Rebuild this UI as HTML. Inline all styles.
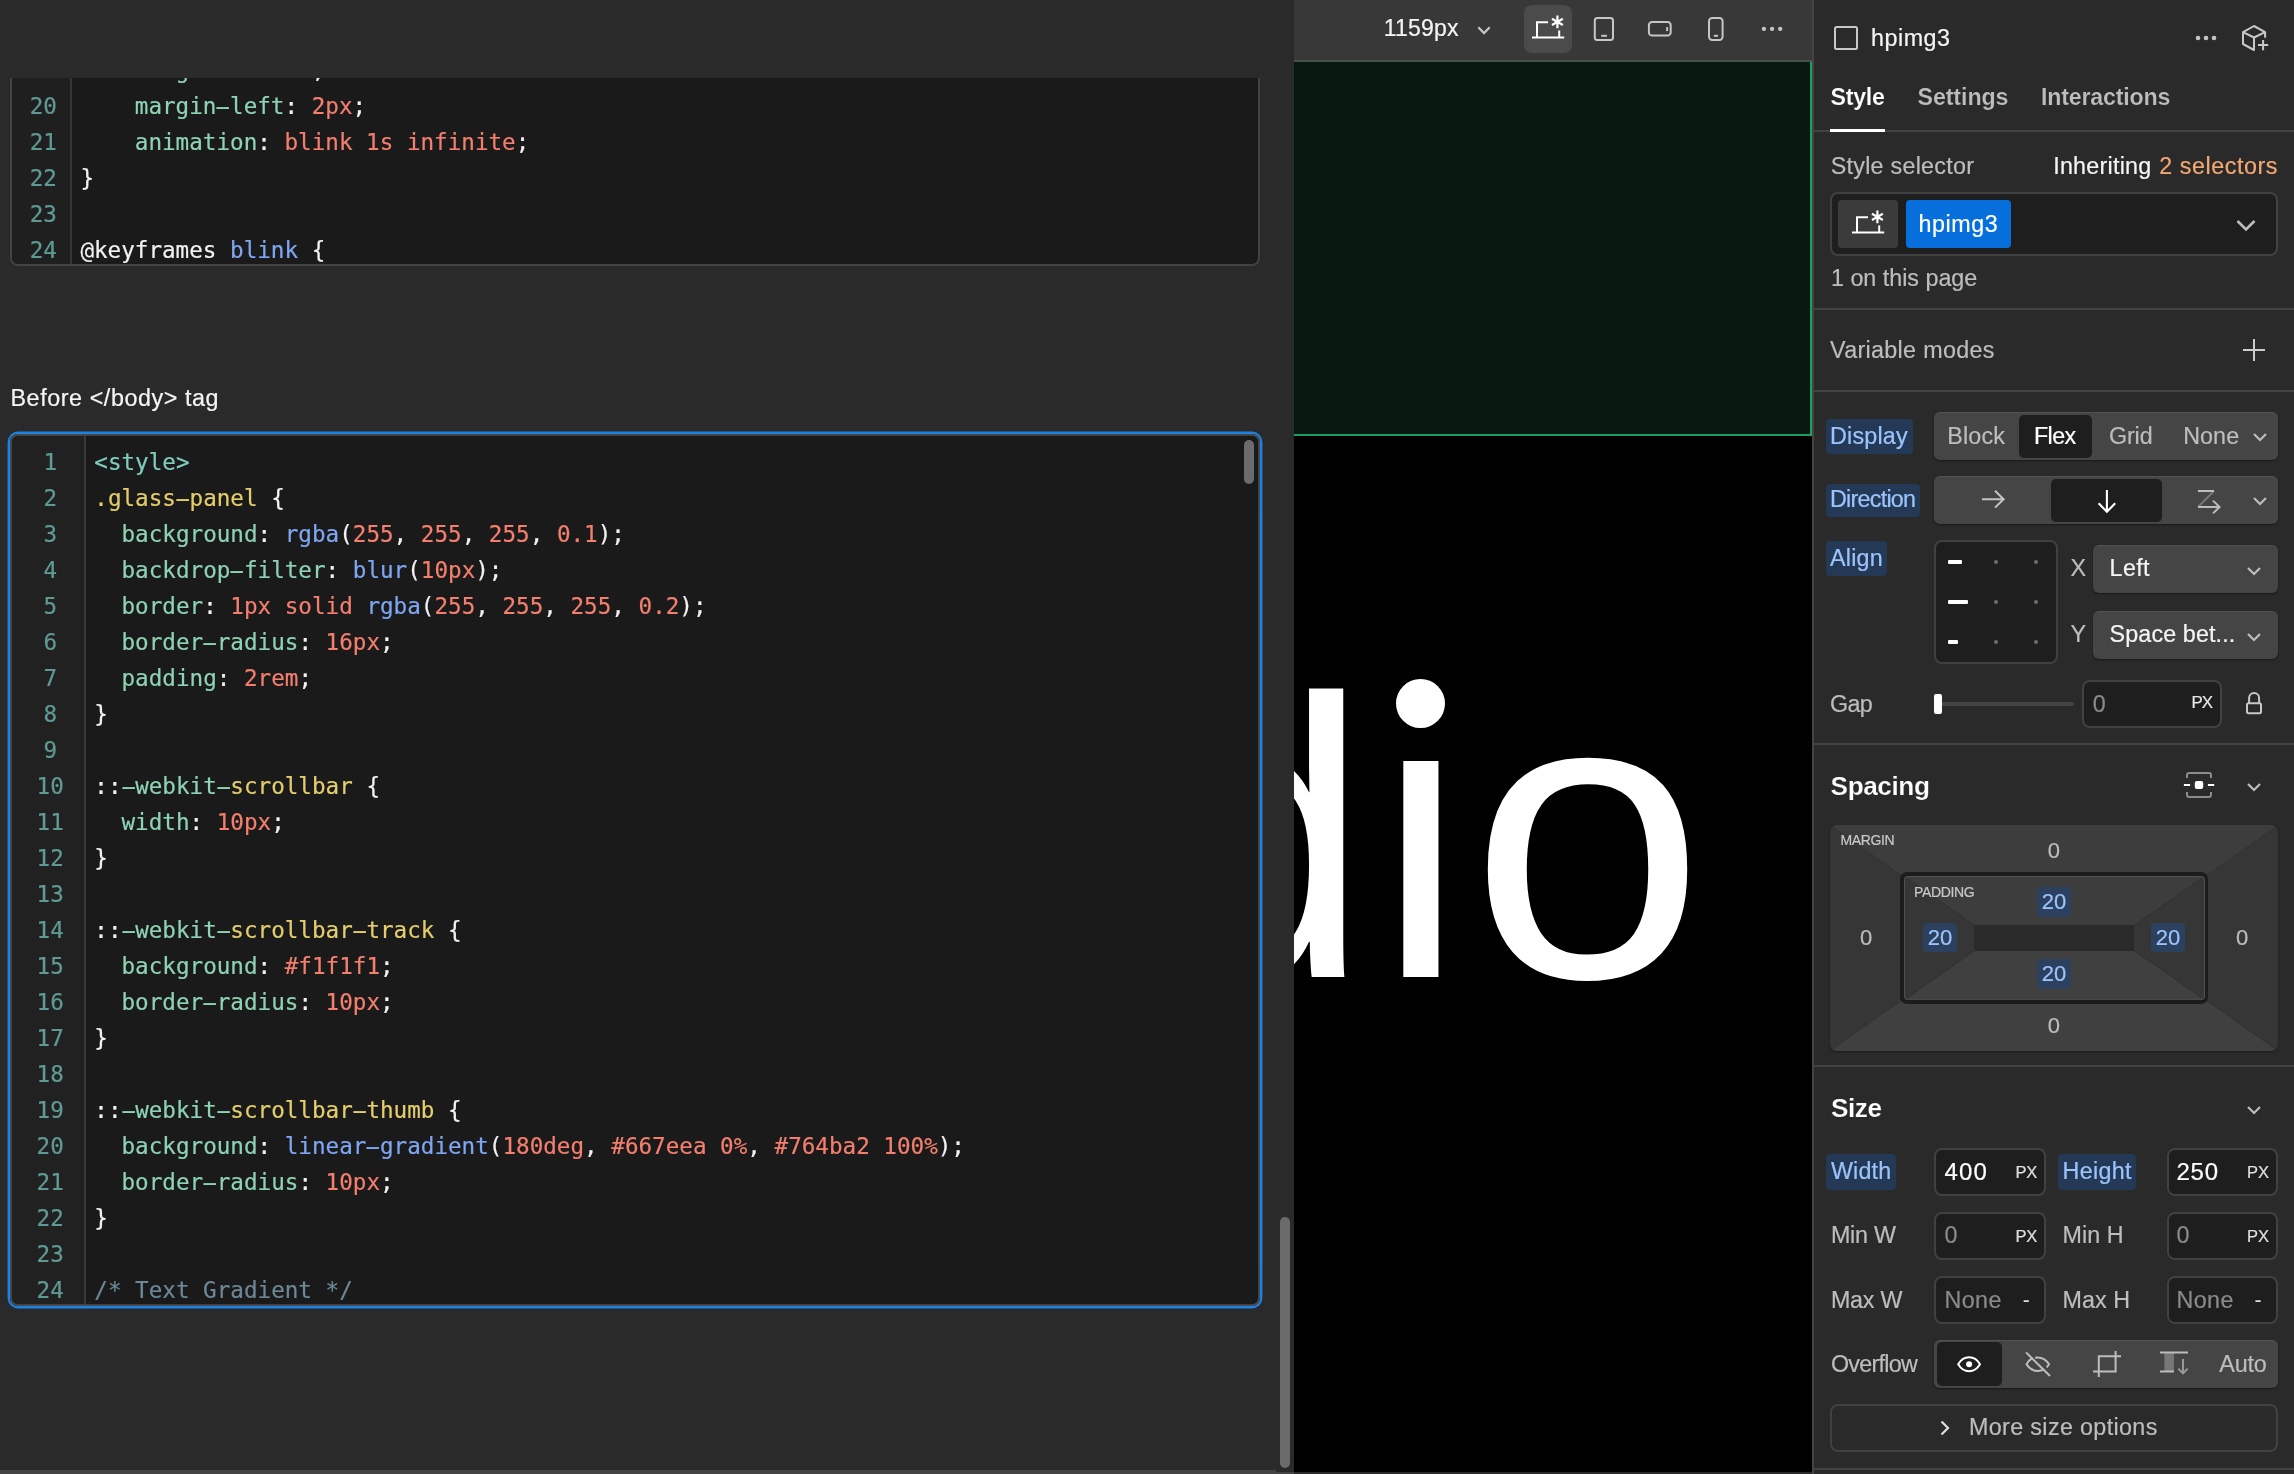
<!DOCTYPE html>
<html lang="en"><head><meta charset="utf-8"><title>Designer</title>
<style>
html,body{margin:0;padding:0}
body{will-change:transform;width:2294px;height:1474px;position:relative;overflow:hidden;background:#2a2a2a;font-family:"Liberation Sans",sans-serif;-webkit-font-smoothing:antialiased}
.b{position:absolute;box-sizing:border-box;display:block}
.t{position:absolute;white-space:pre;display:block}
.code{position:absolute;white-space:pre;font-family:"DejaVu Sans Mono","Liberation Mono",monospace;font-size:22.6px;line-height:36px;height:36px;color:#f2f2f2;letter-spacing:0;-webkit-text-stroke:0.2px}
.ln{position:absolute;white-space:pre;font-family:"DejaVu Sans Mono","Liberation Mono",monospace;font-size:22.6px;line-height:36px;height:36px;color:#5f9a94;text-align:center;width:60px;-webkit-text-stroke:0.2px}
.p{color:#8dd3b4}.n{color:#f47f6e}.f{color:#7ea6f2}.s{color:#e4cd6c}.g{color:#7fcdbd}.c{color:#6d8796}
.big{position:absolute;white-space:pre;color:#fff;font-family:"Liberation Sans",sans-serif;display:block}
.h{display:inline-block;font-style:normal;transform:scaleX(2.1)}

</style></head>
<body>
<!-- left: custom code panel -->
<div class="b" style="left:0px;top:0px;width:1294px;height:1474px;background:#2a2a2a"></div>
<div class="b" style="left:10px;top:78px;width:1250px;height:188px;background:#1a1a1a;border:2px solid #434343;border-top:none;border-radius:0 0 8px 8px;overflow:hidden">
<div class="b" style="left:0;top:0;width:60px;height:200px;background:#1f1f1f;border-right:2px solid #363636"></div>
</div>
<div class="b" style="left:12px;top:78px;width:1246px;height:185px;overflow:hidden">
<div class="ln" style="left:1.3px;top:-25.8px">19</div><div class="code" style="left:68.4px;top:-25.8px">    <span class=p>height</span>: <span class=n>1.2em</span>;</div>
<div class="ln" style="left:1.3px;top:10.2px">20</div><div class="code" style="left:68.4px;top:10.2px">    <span class=p>margin<i class=h>-</i>left</span>: <span class=n>2px</span>;</div>
<div class="ln" style="left:1.3px;top:46.2px">21</div><div class="code" style="left:68.4px;top:46.2px">    <span class=p>animation</span>: <span class=n>blink 1s infinite</span>;</div>
<div class="ln" style="left:1.3px;top:82.2px">22</div><div class="code" style="left:68.4px;top:82.2px">}</div>
<div class="ln" style="left:1.3px;top:118.2px">23</div><div class="code" style="left:68.4px;top:118.2px"></div>
<div class="ln" style="left:1.3px;top:154.2px">24</div><div class="code" style="left:68.4px;top:154.2px">@keyframes <span class=f>blink</span> {</div>
</div>
<span class="t" style="left:10.5px;top:386.6px;font-size:23.3px;line-height:23.3px;color:#f5f5f5;font-weight:normal;letter-spacing:0.58px;-webkit-text-stroke:0.2px;">Before &lt;/body&gt; tag</span>
<div class="b" style="left:10px;top:434px;width:1250px;height:872px;background:#1a1a1a;border-radius:8px;box-shadow:0 0 0 2.4px #1d80e3;overflow:hidden">
<div class="b" style="left:0;top:0;width:76px;height:900px;background:#212121;border-right:2px solid #383838"></div>
</div>
<div class="b" style="left:12px;top:436px;width:1246px;height:868px;overflow:hidden">
<div class="ln" style="left:8.2px;top:7.8px">1</div><div class="code" style="left:82.3px;top:7.8px"><span class=g>&lt;style&gt;</span></div>
<div class="ln" style="left:8.2px;top:43.8px">2</div><div class="code" style="left:82.3px;top:43.8px"><span class=s>.glass<i class=h>-</i>panel</span> {</div>
<div class="ln" style="left:8.2px;top:79.8px">3</div><div class="code" style="left:82.3px;top:79.8px">  <span class=p>background</span>: <span class=f>rgba</span>(<span class=n>255</span>, <span class=n>255</span>, <span class=n>255</span>, <span class=n>0.1</span>);</div>
<div class="ln" style="left:8.2px;top:115.8px">4</div><div class="code" style="left:82.3px;top:115.8px">  <span class=p>backdrop<i class=h>-</i>filter</span>: <span class=f>blur</span>(<span class=n>10px</span>);</div>
<div class="ln" style="left:8.2px;top:151.8px">5</div><div class="code" style="left:82.3px;top:151.8px">  <span class=p>border</span>: <span class=n>1px solid</span> <span class=f>rgba</span>(<span class=n>255</span>, <span class=n>255</span>, <span class=n>255</span>, <span class=n>0.2</span>);</div>
<div class="ln" style="left:8.2px;top:187.8px">6</div><div class="code" style="left:82.3px;top:187.8px">  <span class=p>border<i class=h>-</i>radius</span>: <span class=n>16px</span>;</div>
<div class="ln" style="left:8.2px;top:223.8px">7</div><div class="code" style="left:82.3px;top:223.8px">  <span class=p>padding</span>: <span class=n>2rem</span>;</div>
<div class="ln" style="left:8.2px;top:259.8px">8</div><div class="code" style="left:82.3px;top:259.8px">}</div>
<div class="ln" style="left:8.2px;top:295.8px">9</div><div class="code" style="left:82.3px;top:295.8px"></div>
<div class="ln" style="left:8.2px;top:331.8px">10</div><div class="code" style="left:82.3px;top:331.8px">::<span class=p><i class=h>-</i>webkit<i class=h>-</i></span><span class=s>scrollbar</span> {</div>
<div class="ln" style="left:8.2px;top:367.8px">11</div><div class="code" style="left:82.3px;top:367.8px">  <span class=p>width</span>: <span class=n>10px</span>;</div>
<div class="ln" style="left:8.2px;top:403.8px">12</div><div class="code" style="left:82.3px;top:403.8px">}</div>
<div class="ln" style="left:8.2px;top:439.8px">13</div><div class="code" style="left:82.3px;top:439.8px"></div>
<div class="ln" style="left:8.2px;top:475.8px">14</div><div class="code" style="left:82.3px;top:475.8px">::<span class=p><i class=h>-</i>webkit<i class=h>-</i></span><span class=s>scrollbar<i class=h>-</i>track</span> {</div>
<div class="ln" style="left:8.2px;top:511.8px">15</div><div class="code" style="left:82.3px;top:511.8px">  <span class=p>background</span>: <span class=n>#f1f1f1</span>;</div>
<div class="ln" style="left:8.2px;top:547.8px">16</div><div class="code" style="left:82.3px;top:547.8px">  <span class=p>border<i class=h>-</i>radius</span>: <span class=n>10px</span>;</div>
<div class="ln" style="left:8.2px;top:583.8px">17</div><div class="code" style="left:82.3px;top:583.8px">}</div>
<div class="ln" style="left:8.2px;top:619.8px">18</div><div class="code" style="left:82.3px;top:619.8px"></div>
<div class="ln" style="left:8.2px;top:655.8px">19</div><div class="code" style="left:82.3px;top:655.8px">::<span class=p><i class=h>-</i>webkit<i class=h>-</i></span><span class=s>scrollbar<i class=h>-</i>thumb</span> {</div>
<div class="ln" style="left:8.2px;top:691.8px">20</div><div class="code" style="left:82.3px;top:691.8px">  <span class=p>background</span>: <span class=f>linear<i class=h>-</i>gradient</span>(<span class=n>180deg</span>, <span class=n>#667eea 0%</span>, <span class=n>#764ba2 100%</span>);</div>
<div class="ln" style="left:8.2px;top:727.8px">21</div><div class="code" style="left:82.3px;top:727.8px">  <span class=p>border<i class=h>-</i>radius</span>: <span class=n>10px</span>;</div>
<div class="ln" style="left:8.2px;top:763.8px">22</div><div class="code" style="left:82.3px;top:763.8px">}</div>
<div class="ln" style="left:8.2px;top:799.8px">23</div><div class="code" style="left:82.3px;top:799.8px"></div>
<div class="ln" style="left:8.2px;top:835.8px">24</div><div class="code" style="left:82.3px;top:835.8px"><span class=c>/* Text Gradient */</span></div>
</div>
<div class="b" style="left:10px;top:434px;width:1250px;height:872px;border-radius:8px;box-shadow:inset 0 0 0 1.8px #4c4c50"></div>
<div class="b" style="left:1244px;top:440px;width:10px;height:44px;background:#6b6b6b;border-radius:5px"></div>
<div class="b" style="left:1280px;top:1217px;width:10px;height:251px;background:#6b6b6b;border-radius:5px"></div>
<div class="b" style="left:0px;top:1470px;width:1276px;height:4px;background:#444"></div>
<div class="b" style="left:1276px;top:1472px;width:18px;height:2px;background:#444"></div>
<!-- canvas -->
<div class="b" style="left:1294px;top:0px;width:520px;height:1474px;background:#000"></div>
<div class="b" style="left:1294px;top:0px;width:518px;height:62px;background:#383838;border-bottom:2px solid #4a504d"></div>
<div class="b" style="left:1812px;top:0px;width:2px;height:1474px;background:#464446"></div>
<div class="b" style="left:1294px;top:62px;width:518px;height:374px;background:#07190f;border-right:2px solid #1ba05f;border-bottom:2px solid #1ba05f"></div>
<div class="b" style="left:1294px;top:1472px;width:518px;height:2px;background:#2a2a2a"></div>
<span class="t" style="left:1383.8px;top:17.3px;font-size:23px;line-height:23px;color:#f5f5f5;font-weight:normal;letter-spacing:0.21px;-webkit-text-stroke:0.2px;">1159px</span>
<svg class="b" style="left:1474px;top:20px" width="20" height="20" viewBox="0 0 20 20" fill="none"><path d="M4.3 7.3 L10 13.1 L15.7 7.3" stroke="#c6c6c6" stroke-width="2.2"/></svg>
<div class="b" style="left:1524px;top:5px;width:48px;height:48px;background:#4b4b4b;border-radius:8px"></div>
<svg class="b" style="left:1531.8px;top:12.399999999999999px;overflow:visible" width="34.0" height="28.0" viewBox="0 -8 34 28" fill="none"><g stroke="#fff" stroke-width="2" stroke-linecap="butt"><path d="M0 17.5 H32.2"/><path d="M5 17.5 V2.3 H16"/><path d="M27.2 17.5 V10.4"/><path d="M25.4 -4.4 V8.2 M19.95 -1.25 L30.85 5.05 M30.85 -1.25 L19.95 5.05" stroke-width="2.2"/></g></svg>
<svg class="b" style="left:1590px;top:14px" width="28" height="30" viewBox="1590 14 28 30" fill="none"><rect x="1594.8" y="18.1" width="18.2" height="21.8" rx="2.5" stroke="#c6c6c6" stroke-width="2"/><path d="M1601.2 35.8 H1606.9" stroke="#c6c6c6" stroke-width="2"/></svg>
<svg class="b" style="left:1644px;top:16px" width="32" height="26" viewBox="1644 16 32 26" fill="none"><rect x="1648.9" y="22" width="21.8" height="13.6" rx="3.2" stroke="#c6c6c6" stroke-width="2"/><path d="M1667.1 27.1 V31.1" stroke="#c6c6c6" stroke-width="2"/></svg>
<svg class="b" style="left:1704px;top:14px" width="24" height="30" viewBox="1704 14 24 30" fill="none"><rect x="1709" y="18.1" width="13.6" height="21.8" rx="3.2" stroke="#c6c6c6" stroke-width="2"/><path d="M1713.8 35.8 H1718" stroke="#c6c6c6" stroke-width="2"/></svg>
<svg class="b" style="left:1758px;top:24px" width="30" height="10" viewBox="1758 24 30 10"><circle cx="1763.9" cy="28.9" r="2.15" fill="#c6c6c6"/><circle cx="1772.05" cy="28.9" r="2.15" fill="#c6c6c6"/><circle cx="1780.2" cy="28.9" r="2.15" fill="#c6c6c6"/></svg>
<div class="b" style="left:1294px;top:436px;width:516px;height:1036px;overflow:hidden">
<span class="big" style="left:-152.5px;top:191px;font-size:414px;line-height:414px;clip-path:inset(61.5px 0 0 0);transform:scaleX(0.94);transform-origin:184px 50%">d</span>
<span class="big" style="left:81px;top:191px;font-size:414px;line-height:414px;clip-path:inset(134px 0 0 0);transform:scaleX(0.965);transform-origin:45.6px 50%">i</span>
<div class="b" style="left:102px;top:242.5px;width:49px;height:49px;border-radius:50%;background:#fff"></div>
<span class="big" style="left:180px;top:191px;font-size:414px;line-height:414px;transform:scale(1.02,0.984);transform-origin:85% 354px">o</span>
</div>
<!-- right: style panel -->
<div class="b" style="left:1814px;top:0px;width:480px;height:1474px;background:#2a2a2a"></div>
<div class="b" style="left:1834px;top:26px;width:24px;height:24px;border:2px solid #c8c8c8;border-radius:2.5px"></div>
<span class="t" style="left:1871.0px;top:26.6px;font-size:23.3px;line-height:23.3px;color:#f5f5f5;font-weight:normal;letter-spacing:0.52px;-webkit-text-stroke:0.2px;">hpimg3</span>
<svg class="b" style="left:2190px;top:30px" width="32" height="16" viewBox="0 0 32 16" fill="none"><circle cx="8" cy="8" r="2.3" fill="#c4c4c4"/><circle cx="16" cy="8" r="2.3" fill="#c4c4c4"/><circle cx="24" cy="8" r="2.3" fill="#c4c4c4"/></svg>
<svg class="b" style="left:2236px;top:20px" width="36" height="34" viewBox="2236 20 36 34" fill="none"><g stroke="#c8c8c8" stroke-width="2" stroke-linejoin="round" stroke-linecap="butt"><path d="M2243 32.1 L2254 26 L2265.1 32.1 L2254 37.5 Z M2243 32.1 V44 L2254 50 V37.5 M2265.1 32.1 V37.8"/><path d="M2258 45 H2268.2 M2263.1 40 V50.2"/></g></svg>
<span class="t" style="left:1830.5px;top:85.5px;font-size:23.2px;line-height:23.2px;color:#fff;font-weight:bold;letter-spacing:-0.24px;-webkit-text-stroke:0.16px #2a2a2a;">Style</span>
<span class="t" style="left:1917.5px;top:85.5px;font-size:23.2px;line-height:23.2px;color:#bdbdbd;font-weight:bold;letter-spacing:-0.07px;-webkit-text-stroke:0.16px #2a2a2a;">Settings</span>
<span class="t" style="left:2041.0px;top:85.5px;font-size:23.2px;line-height:23.2px;color:#bdbdbd;font-weight:bold;letter-spacing:-0.18px;-webkit-text-stroke:0.16px #2a2a2a;">Interactions</span>
<div class="b" style="left:1814px;top:130px;width:480px;height:2px;background:#434343"></div>
<div class="b" style="left:1830px;top:129px;width:55px;height:3px;background:#fff"></div>
<span class="t" style="left:1830.7px;top:155.2px;font-size:23.3px;line-height:23.3px;color:#bdbdbd;font-weight:normal;letter-spacing:0.26px;-webkit-text-stroke:0.2px;">Style selector</span>
<span class="t" style="left:2053.2px;top:155.2px;font-size:23.3px;line-height:23.3px;color:#f5f5f5;font-weight:normal;letter-spacing:0.25px;-webkit-text-stroke:0.2px;">Inheriting</span>
<span class="t" style="left:2159.3px;top:155.2px;font-size:23.3px;line-height:23.3px;color:#f2a873;font-weight:normal;letter-spacing:0.55px;-webkit-text-stroke:0.2px;">2 selectors</span>
<div class="b" style="left:1830px;top:192px;width:448px;height:64px;background:#1e1e1e;border:2px solid #414141;border-radius:8px"></div>
<div class="b" style="left:1838px;top:200px;width:60px;height:48px;background:#3b3b3b;border-radius:4px"></div>
<svg class="b" style="left:1852px;top:207.4px;overflow:visible" width="34.0" height="28.0" viewBox="0 -8 34 28" fill="none"><g stroke="#fff" stroke-width="2" stroke-linecap="butt"><path d="M0 17.5 H32.2"/><path d="M5 17.5 V2.3 H16"/><path d="M27.2 17.5 V10.4"/><path d="M25.4 -4.4 V8.2 M19.95 -1.25 L30.85 5.05 M30.85 -1.25 L19.95 5.05" stroke-width="2.2"/></g></svg>
<div class="b" style="left:1906px;top:200px;width:105px;height:48px;background:#066fdc;border-radius:4px"></div>
<span class="t" style="left:1918.6px;top:212.8px;font-size:23.3px;line-height:23.3px;color:#fff;font-weight:normal;letter-spacing:0.54px;-webkit-text-stroke:0.2px;">hpimg3</span>
<svg class="b" style="left:2234px;top:214px" width="24" height="22" viewBox="0 0 24 22" fill="none"><path d="M3.5 7 L12 15.5 L20.5 7" stroke="#bdbdbd" stroke-width="2.6"/></svg>
<span class="t" style="left:1831.0px;top:266.8px;font-size:23.3px;line-height:23.3px;color:#bdbdbd;font-weight:normal;letter-spacing:-0.01px;-webkit-text-stroke:0.2px;">1 on this page</span>
<div class="b" style="left:1814px;top:308px;width:480px;height:2px;background:#434343"></div>
<span class="t" style="left:1830.0px;top:338.5px;font-size:23.3px;line-height:23.3px;color:#bdbdbd;font-weight:normal;letter-spacing:0.33px;-webkit-text-stroke:0.2px;">Variable modes</span>
<svg class="b" style="left:2242px;top:338px" width="24" height="24" viewBox="0 0 24 24" fill="none"><path d="M12 1 V23 M1 12 H23" stroke="#cccccc" stroke-width="2"/></svg>
<div class="b" style="left:1814px;top:390px;width:480px;height:2px;background:#434343"></div>
<div class="b" style="left:1826px;top:418.5px;width:86.5px;height:35.0px;background:#233956;border-radius:4px"></div>
<span class="t" style="left:1830.0px;top:424.8px;font-size:23.3px;line-height:23.3px;color:#9cc4fc;font-weight:normal;letter-spacing:0.20px;-webkit-text-stroke:0.2px;">Display</span>
<div class="b" style="left:1934px;top:412px;width:344px;height:48px;background:#454545;border-radius:6px;box-shadow:inset 0 1px 0 rgba(255,255,255,.07),0 1px 2px rgba(0,0,0,.45)"></div>
<div class="b" style="left:2018.5px;top:414.5px;width:73.5px;height:43.0px;background:#1e1e1e;border-radius:5px"></div>
<span class="t" style="left:1947.3px;top:424.8px;font-size:23.3px;line-height:23.3px;color:#bdbdbd;font-weight:normal;letter-spacing:0.18px;-webkit-text-stroke:0.2px;">Block</span>
<span class="t" style="left:2034.0px;top:424.8px;font-size:23.3px;line-height:23.3px;color:#fff;font-weight:normal;letter-spacing:-0.61px;-webkit-text-stroke:0.2px;">Flex</span>
<span class="t" style="left:2109.0px;top:424.8px;font-size:23.3px;line-height:23.3px;color:#bdbdbd;font-weight:normal;letter-spacing:-0.14px;-webkit-text-stroke:0.2px;">Grid</span>
<span class="t" style="left:2183.2px;top:424.8px;font-size:23.3px;line-height:23.3px;color:#bdbdbd;font-weight:normal;letter-spacing:0.07px;-webkit-text-stroke:0.2px;">None</span>
<svg class="b" style="left:2251.2px;top:431.0px" width="18" height="12" viewBox="0 0 18 12" fill="none"><path d="M3 3 L9.0 9 L15 3" stroke="#bdbdbd" stroke-width="2.2"/></svg>
<div class="b" style="left:1826px;top:483.5px;width:94px;height:33.5px;background:#233956;border-radius:4px"></div>
<span class="t" style="left:1830.0px;top:488.3px;font-size:23.3px;line-height:23.3px;color:#9cc4fc;font-weight:normal;letter-spacing:-0.74px;-webkit-text-stroke:0.2px;">Direction</span>
<div class="b" style="left:1934px;top:476px;width:344px;height:48px;background:#454545;border-radius:6px;box-shadow:inset 0 1px 0 rgba(255,255,255,.07),0 1px 2px rgba(0,0,0,.45)"></div>
<div class="b" style="left:2050.5px;top:478.5px;width:111.5px;height:43.0px;background:#1e1e1e;border-radius:5px"></div>
<svg class="b" style="left:1978px;top:486px" width="30" height="26" viewBox="1978 486 30 26" fill="none"><path d="M1982 499.2 H2003.5 M1995 490.8 L2003.6 499.2 L1995 507.6" stroke="#c4c4c4" stroke-width="2"/></svg>
<svg class="b" style="left:2094px;top:486px" width="26" height="30" viewBox="2094 486 26 30" fill="none"><path d="M2106.9 490 V511.6 M2098.6 503.2 L2106.9 511.8 L2115.2 503.2" stroke="#fff" stroke-width="2.1"/></svg>
<svg class="b" style="left:2194px;top:486px" width="30" height="30" viewBox="2194 486 30 30" fill="none"><path d="M2214 491 L2198 507" stroke="#777" stroke-width="2"/><path d="M2198 491 H2214 M2198 507 H2219 M2213 500.6 L2219.6 507 L2213 513.4" stroke="#bdbdbd" stroke-width="2"/></svg>
<svg class="b" style="left:2251.2px;top:495.3px" width="18" height="12" viewBox="0 0 18 12" fill="none"><path d="M3 3 L9.0 9 L15 3" stroke="#bdbdbd" stroke-width="2.2"/></svg>
<div class="b" style="left:1826px;top:540.5px;width:60.700000000000045px;height:35.0px;background:#233956;border-radius:4px"></div>
<span class="t" style="left:1830.0px;top:546.8px;font-size:23.3px;line-height:23.3px;color:#9cc4fc;font-weight:normal;letter-spacing:0.22px;-webkit-text-stroke:0.2px;">Align</span>
<div class="b" style="left:1934px;top:540px;width:123.5px;height:123.5px;background:#1e1e1e;border:2px solid #414141;border-radius:8px"></div>
<div class="b" style="left:1948px;top:559.8px;width:14px;height:4.400000000000091px;background:#fff;border-radius:1px"></div>
<div class="b" style="left:1993.6px;top:559.8px;width:4.400000000000091px;height:4.400000000000091px;background:#6e6e6e;border-radius:50%"></div>
<div class="b" style="left:2033.7px;top:559.8px;width:4.400000000000091px;height:4.400000000000091px;background:#6e6e6e;border-radius:50%"></div>
<div class="b" style="left:1948px;top:599.8px;width:20px;height:4.400000000000091px;background:#fff;border-radius:1px"></div>
<div class="b" style="left:1993.6px;top:599.8px;width:4.400000000000091px;height:4.400000000000091px;background:#6e6e6e;border-radius:50%"></div>
<div class="b" style="left:2033.7px;top:599.8px;width:4.400000000000091px;height:4.400000000000091px;background:#6e6e6e;border-radius:50%"></div>
<div class="b" style="left:1948px;top:639.8px;width:10.200000000000045px;height:4.400000000000091px;background:#fff;border-radius:1px"></div>
<div class="b" style="left:1993.6px;top:639.8px;width:4.400000000000091px;height:4.400000000000091px;background:#6e6e6e;border-radius:50%"></div>
<div class="b" style="left:2033.7px;top:639.8px;width:4.400000000000091px;height:4.400000000000091px;background:#6e6e6e;border-radius:50%"></div>
<span class="t" style="left:2070.5px;top:557.0px;font-size:23.3px;line-height:23.3px;color:#bdbdbd;font-weight:normal;letter-spacing:0.00px;-webkit-text-stroke:0.2px;">X</span>
<div class="b" style="left:2093px;top:545px;width:185px;height:48px;background:#454545;border-radius:6px;box-shadow:inset 0 1px 0 rgba(255,255,255,.07),0 1px 2px rgba(0,0,0,.45)"></div>
<span class="t" style="left:2109.6px;top:556.8px;font-size:23.3px;line-height:23.3px;color:#f5f5f5;font-weight:normal;letter-spacing:0.35px;-webkit-text-stroke:0.2px;">Left</span>
<svg class="b" style="left:2244.5px;top:564.5px" width="18" height="12" viewBox="0 0 18 12" fill="none"><path d="M3 3 L9.0 9 L15 3" stroke="#bdbdbd" stroke-width="2.2"/></svg>
<span class="t" style="left:2070.5px;top:623.2px;font-size:23.3px;line-height:23.3px;color:#bdbdbd;font-weight:normal;letter-spacing:0.00px;-webkit-text-stroke:0.2px;">Y</span>
<div class="b" style="left:2093px;top:610.5px;width:185px;height:48.5px;background:#454545;border-radius:6px;box-shadow:inset 0 1px 0 rgba(255,255,255,.07),0 1px 2px rgba(0,0,0,.45)"></div>
<span class="t" style="left:2109.6px;top:623.2px;font-size:23.3px;line-height:23.3px;color:#f5f5f5;font-weight:normal;letter-spacing:0.12px;-webkit-text-stroke:0.2px;">Space bet...</span>
<svg class="b" style="left:2244.5px;top:631.0px" width="18" height="12" viewBox="0 0 18 12" fill="none"><path d="M3 3 L9.0 9 L15 3" stroke="#bdbdbd" stroke-width="2.2"/></svg>
<span class="t" style="left:1830.0px;top:693.4px;font-size:23.3px;line-height:23.3px;color:#bdbdbd;font-weight:normal;letter-spacing:-0.67px;-webkit-text-stroke:0.2px;">Gap</span>
<div class="b" style="left:1938px;top:702px;width:136px;height:4px;background:#444;border-radius:2px"></div>
<div class="b" style="left:1933.7px;top:694px;width:8.799999999999955px;height:20px;background:#fff;border-radius:2px"></div>
<div class="b" style="left:2082px;top:680px;width:140px;height:48px;background:#1e1e1e;border:2px solid #414141;border-radius:8px"></div>
<span class="t" style="left:2092.7px;top:693.4px;font-size:23.3px;line-height:23.3px;color:#8a8a8a;font-weight:normal;letter-spacing:0.00px;-webkit-text-stroke:0.2px;">0</span>
<span class="t" style="left:2191.5px;top:695.4px;font-size:16.9px;line-height:16.9px;color:#e8e8e8;font-weight:normal;letter-spacing:-1.05px;-webkit-text-stroke:0.2px;">PX</span>
<svg class="b" style="left:2242px;top:688px" width="24" height="30" viewBox="2242 688 24 30" fill="none"><rect x="2247" y="703.3" width="14" height="9.9" rx="1.5" stroke="#c8c8c8" stroke-width="2"/><path d="M2249.1 703 V697.9 a5 5 0 0 1 10 0 V703" stroke="#c8c8c8" stroke-width="2"/></svg>
<div class="b" style="left:1814px;top:743px;width:480px;height:2px;background:#434343"></div>
<span class="t" style="left:1830.6px;top:773.3px;font-size:26.2px;line-height:26.2px;color:#fff;font-weight:bold;letter-spacing:-0.42px;-webkit-text-stroke:0.18px #2a2a2a;">Spacing</span>
<svg class="b" style="left:2180px;top:768px" width="38" height="34" viewBox="2180 768 38 34" fill="none"><path d="M2187 778 V775 a2 2 0 0 1 2 -2 H2209 a2 2 0 0 1 2 2 V778 M2187 792 V795 a2 2 0 0 0 2 2 H2209 a2 2 0 0 0 2 -2 V792" stroke="#8c8c8c" stroke-width="2"/><path d="M2183.9 785 H2190.1 M2207.9 785 H2214.2" stroke="#fff" stroke-width="2"/><rect x="2194.8" y="780.9" width="8.4" height="8.2" rx="2" fill="#fff"/></svg>
<svg class="b" style="left:2245.0px;top:781.3px" width="18" height="12" viewBox="0 0 18 12" fill="none"><path d="M3 3 L9.0 9 L15 3" stroke="#bdbdbd" stroke-width="2.2"/></svg>
<svg class="b" style="left:1830px;top:825px;border-radius:7px;box-shadow:0 1px 2px rgba(0,0,0,.4)" width="448" height="226" viewBox="0 0 448 226"><path d="M0 0 H448 L340 76 H108 Z" fill="#3d3d3d"/><path d="M0 226 H448 L340 150 H108 Z" fill="#404040"/><path d="M0 0 L108 76 V150 L0 226 Z" fill="#363636"/><path d="M448 0 L340 76 V150 L448 226 Z" fill="#363636"/></svg>
<span class="t" style="left:1840.4px;top:832.8px;font-size:14px;line-height:14px;color:#c8c8c8;font-weight:normal;letter-spacing:-0.36px;-webkit-text-stroke:0.2px;">MARGIN</span>
<span class="t" style="left:2047.8px;top:839.9px;font-size:22px;line-height:22px;color:#bdbdbd;font-weight:normal;letter-spacing:0.00px;-webkit-text-stroke:0.2px;">0</span>
<span class="t" style="left:1859.9px;top:927.1px;font-size:22px;line-height:22px;color:#bdbdbd;font-weight:normal;letter-spacing:0.00px;-webkit-text-stroke:0.2px;">0</span>
<span class="t" style="left:2235.9px;top:927.1px;font-size:22px;line-height:22px;color:#bdbdbd;font-weight:normal;letter-spacing:0.00px;-webkit-text-stroke:0.2px;">0</span>
<span class="t" style="left:2047.8px;top:1014.5px;font-size:22px;line-height:22px;color:#bdbdbd;font-weight:normal;letter-spacing:0.00px;-webkit-text-stroke:0.2px;">0</span>
<div class="b" style="left:1900px;top:872px;width:308px;height:131.5px;background:#1c1c1c;border-radius:7px"></div>
<svg class="b" style="left:1903.5px;top:875.5px;border-radius:4px;box-shadow:0 0 0 1px #4d4d4d inset" width="301" height="124.5" viewBox="0 0 301 124.5"><path d="M0 0 H301 L230 49.5 H71 Z" fill="#3d3d3d"/><path d="M0 124.5 H301 L230 74.5 H71 Z" fill="#404040"/><path d="M0 0 L71 49.5 V74.5 L0 124.5 Z" fill="#363636"/><path d="M301 0 L230 49.5 V74.5 L301 124.5 Z" fill="#363636"/><rect x="0.5" y="0.5" width="300" height="123.5" rx="4" fill="none" stroke="#505050"/></svg>
<span class="t" style="left:1914.1px;top:884.8px;font-size:14px;line-height:14px;color:#c8c8c8;font-weight:normal;letter-spacing:-0.36px;-webkit-text-stroke:0.2px;">PADDING</span>
<div class="b" style="left:1974px;top:924.5px;width:160px;height:26.0px;background:#2a2a2a;border-radius:4px"></div>
<div class="b" style="left:2037px;top:887px;width:34px;height:29.5px;background:#2b415f;border-radius:4px"></div>
<span class="t" style="left:2041.8px;top:890.9px;font-size:22px;line-height:22px;color:#9cc4fc;font-weight:normal;letter-spacing:-0.00px;-webkit-text-stroke:0.2px;">20</span>
<div class="b" style="left:1922.7px;top:922.7px;width:34.299999999999955px;height:29.799999999999955px;background:#2b415f;border-radius:4px"></div>
<span class="t" style="left:1927.8px;top:927.1px;font-size:22px;line-height:22px;color:#9cc4fc;font-weight:normal;letter-spacing:-0.00px;-webkit-text-stroke:0.2px;">20</span>
<div class="b" style="left:2150.6px;top:922.7px;width:34.70000000000027px;height:29.799999999999955px;background:#2b415f;border-radius:4px"></div>
<span class="t" style="left:2155.8px;top:927.1px;font-size:22px;line-height:22px;color:#9cc4fc;font-weight:normal;letter-spacing:-0.00px;-webkit-text-stroke:0.2px;">20</span>
<div class="b" style="left:2037px;top:959.3px;width:34px;height:29.40000000000009px;background:#2b415f;border-radius:4px"></div>
<span class="t" style="left:2041.8px;top:963.2px;font-size:22px;line-height:22px;color:#9cc4fc;font-weight:normal;letter-spacing:-0.00px;-webkit-text-stroke:0.2px;">20</span>
<div class="b" style="left:1814px;top:1065px;width:480px;height:2px;background:#434343"></div>
<span class="t" style="left:1830.9px;top:1095.0px;font-size:26.2px;line-height:26.2px;color:#fff;font-weight:bold;letter-spacing:-0.44px;-webkit-text-stroke:0.18px #2a2a2a;">Size</span>
<svg class="b" style="left:2244.6px;top:1103.5px" width="18" height="12" viewBox="0 0 18 12" fill="none"><path d="M3 3 L9.0 9 L15 3" stroke="#bdbdbd" stroke-width="2.2"/></svg>
<div class="b" style="left:1826px;top:1154px;width:70px;height:36px;background:#233956;border-radius:4px"></div>
<span class="t" style="left:1830.9px;top:1160.2px;font-size:23.3px;line-height:23.3px;color:#9cc4fc;font-weight:normal;letter-spacing:0.19px;-webkit-text-stroke:0.2px;">Width</span>
<div class="b" style="left:1934px;top:1148px;width:111.5px;height:47.5px;background:#1e1e1e;border:2px solid #414141;border-radius:8px"></div>
<span class="t" style="left:1944.6px;top:1159.6px;font-size:24px;line-height:24px;color:#fff;font-weight:normal;letter-spacing:1.08px;-webkit-text-stroke:0.2px;">400</span>
<span class="t" style="left:2015.4px;top:1164.0px;font-size:16.5px;line-height:16.5px;color:#e0e0e0;font-weight:normal;letter-spacing:-0.11px;-webkit-text-stroke:0.2px;">PX</span>
<div class="b" style="left:2057.8px;top:1154px;width:78.39999999999964px;height:36px;background:#233956;border-radius:4px"></div>
<span class="t" style="left:2062.6px;top:1160.2px;font-size:23.3px;line-height:23.3px;color:#9cc4fc;font-weight:normal;letter-spacing:0.29px;-webkit-text-stroke:0.2px;">Height</span>
<div class="b" style="left:2166.5px;top:1148px;width:111.5px;height:47.5px;background:#1e1e1e;border:2px solid #414141;border-radius:8px"></div>
<span class="t" style="left:2176.4px;top:1159.6px;font-size:24px;line-height:24px;color:#fff;font-weight:normal;letter-spacing:0.78px;-webkit-text-stroke:0.2px;">250</span>
<span class="t" style="left:2247.1px;top:1164.0px;font-size:16.5px;line-height:16.5px;color:#e0e0e0;font-weight:normal;letter-spacing:-0.11px;-webkit-text-stroke:0.2px;">PX</span>
<span class="t" style="left:1830.9px;top:1223.9px;font-size:23.3px;line-height:23.3px;color:#bdbdbd;font-weight:normal;letter-spacing:-0.23px;-webkit-text-stroke:0.2px;">Min W</span>
<div class="b" style="left:1934px;top:1212px;width:111.5px;height:47.5px;background:#1e1e1e;border:2px solid #414141;border-radius:8px"></div>
<span class="t" style="left:1944.6px;top:1223.9px;font-size:23.3px;line-height:23.3px;color:#8a8a8a;font-weight:normal;letter-spacing:0.00px;-webkit-text-stroke:0.2px;">0</span>
<span class="t" style="left:2015.4px;top:1227.7px;font-size:16.5px;line-height:16.5px;color:#e0e0e0;font-weight:normal;letter-spacing:-0.11px;-webkit-text-stroke:0.2px;">PX</span>
<span class="t" style="left:2062.6px;top:1223.9px;font-size:23.3px;line-height:23.3px;color:#bdbdbd;font-weight:normal;letter-spacing:0.04px;-webkit-text-stroke:0.2px;">Min H</span>
<div class="b" style="left:2166.5px;top:1212px;width:111.5px;height:47.5px;background:#1e1e1e;border:2px solid #414141;border-radius:8px"></div>
<span class="t" style="left:2176.4px;top:1223.9px;font-size:23.3px;line-height:23.3px;color:#8a8a8a;font-weight:normal;letter-spacing:0.00px;-webkit-text-stroke:0.2px;">0</span>
<span class="t" style="left:2247.1px;top:1227.7px;font-size:16.5px;line-height:16.5px;color:#e0e0e0;font-weight:normal;letter-spacing:-0.11px;-webkit-text-stroke:0.2px;">PX</span>
<span class="t" style="left:1830.9px;top:1288.6px;font-size:23.3px;line-height:23.3px;color:#bdbdbd;font-weight:normal;letter-spacing:-0.22px;-webkit-text-stroke:0.2px;">Max W</span>
<div class="b" style="left:1934px;top:1276px;width:111.5px;height:47.5px;background:#1e1e1e;border:2px solid #414141;border-radius:8px"></div>
<span class="t" style="left:1944.6px;top:1288.6px;font-size:23.3px;line-height:23.3px;color:#8a8a8a;font-weight:normal;letter-spacing:0.37px;-webkit-text-stroke:0.2px;">None</span>
<span class="t" style="left:2023.0px;top:1289.6px;font-size:20px;line-height:20px;color:#e0e0e0;font-weight:normal;letter-spacing:0.00px;-webkit-text-stroke:0.2px;">-</span>
<span class="t" style="left:2062.6px;top:1288.6px;font-size:23.3px;line-height:23.3px;color:#bdbdbd;font-weight:normal;letter-spacing:0.02px;-webkit-text-stroke:0.2px;">Max H</span>
<div class="b" style="left:2166.5px;top:1276px;width:111.5px;height:47.5px;background:#1e1e1e;border:2px solid #414141;border-radius:8px"></div>
<span class="t" style="left:2176.4px;top:1288.6px;font-size:23.3px;line-height:23.3px;color:#8a8a8a;font-weight:normal;letter-spacing:0.43px;-webkit-text-stroke:0.2px;">None</span>
<span class="t" style="left:2254.7px;top:1289.6px;font-size:20px;line-height:20px;color:#e0e0e0;font-weight:normal;letter-spacing:0.00px;-webkit-text-stroke:0.2px;">-</span>
<span class="t" style="left:1830.9px;top:1352.6px;font-size:23.3px;line-height:23.3px;color:#bdbdbd;font-weight:normal;letter-spacing:-0.70px;-webkit-text-stroke:0.2px;">Overflow</span>
<div class="b" style="left:1934px;top:1340px;width:344px;height:48px;background:#454545;border-radius:6px;box-shadow:inset 0 1px 0 rgba(255,255,255,.07),0 1px 2px rgba(0,0,0,.45)"></div>
<div class="b" style="left:1936.5px;top:1342px;width:65.5px;height:44px;background:#1e1e1e;border-radius:5px"></div>
<svg class="b" style="left:1954px;top:1350px" width="30" height="28" viewBox="1954 1350 30 28" fill="none"><path d="M1958.2 1364.2 C1961 1359.5 1965 1357.3 1969.1 1357.3 C1973.2 1357.3 1977.2 1359.5 1980 1364.2 C1977.2 1368.9 1973.2 1371.2 1969.1 1371.2 C1965 1371.2 1961 1368.9 1958.2 1364.2 Z" stroke="#fff" stroke-width="2"/><circle cx="1969.1" cy="1364.2" r="3" fill="#fff"/></svg>
<svg class="b" style="left:2022px;top:1348px" width="32" height="32" viewBox="2022 1348 32 32" fill="none"><path d="M2031.5 1358.6 C2029.5 1359.9 2027.9 1361.8 2026.5 1364.2 C2029.3 1368.7 2033.3 1370.9 2037.7 1370.9 C2040 1370.9 2042.2 1370.3 2044.1 1369.1 M2035 1357.8 C2035.9 1357.6 2036.8 1357.5 2037.7 1357.5 C2042 1357.5 2046 1359.7 2049 1364.2 C2048.3 1365.4 2047.5 1366.4 2046.7 1367.3" stroke="#bdbdbd" stroke-width="2"/><path d="M2026 1352.4 L2050 1376" stroke="#bdbdbd" stroke-width="2"/></svg>
<svg class="b" style="left:2090px;top:1348px" width="34" height="32" viewBox="2090 1348 34 32" fill="none"><path d="M2098.8 1377 V1356.3 H2121 M2115.6 1351 V1371.4 H2093" stroke="#bdbdbd" stroke-width="2"/></svg>
<svg class="b" style="left:2158px;top:1348px" width="34" height="30" viewBox="2158 1348 34 30" fill="none"><rect x="2164.4" y="1352.5" width="9.5" height="19" fill="#777"/><path d="M2160 1352.5 H2188 M2160 1371.4 H2174" stroke="#bdbdbd" stroke-width="2"/><path d="M2183 1359 V1373 M2178.3 1368.6 L2183 1373.4 L2187.7 1368.6" stroke="#9a9a9a" stroke-width="2"/></svg>
<span class="t" style="left:2219.3px;top:1352.6px;font-size:23.3px;line-height:23.3px;color:#bdbdbd;font-weight:normal;letter-spacing:-0.14px;-webkit-text-stroke:0.2px;">Auto</span>
<div class="b" style="left:1830px;top:1404px;width:448px;height:47.5px;border:2px solid #414141;border-radius:8px"></div>
<svg class="b" style="left:1938px;top:1418px" width="14" height="20" viewBox="0 0 14 20" fill="none"><path d="M3.5 3.5 L10 10 L3.5 16.5" stroke="#e0e0e0" stroke-width="2.2"/></svg>
<span class="t" style="left:1969.0px;top:1416.4px;font-size:23.3px;line-height:23.3px;color:#bdbdbd;font-weight:normal;letter-spacing:0.36px;-webkit-text-stroke:0.2px;">More size options</span>
<div class="b" style="left:1814px;top:1468px;width:480px;height:2px;background:#434343"></div>
</body></html>
